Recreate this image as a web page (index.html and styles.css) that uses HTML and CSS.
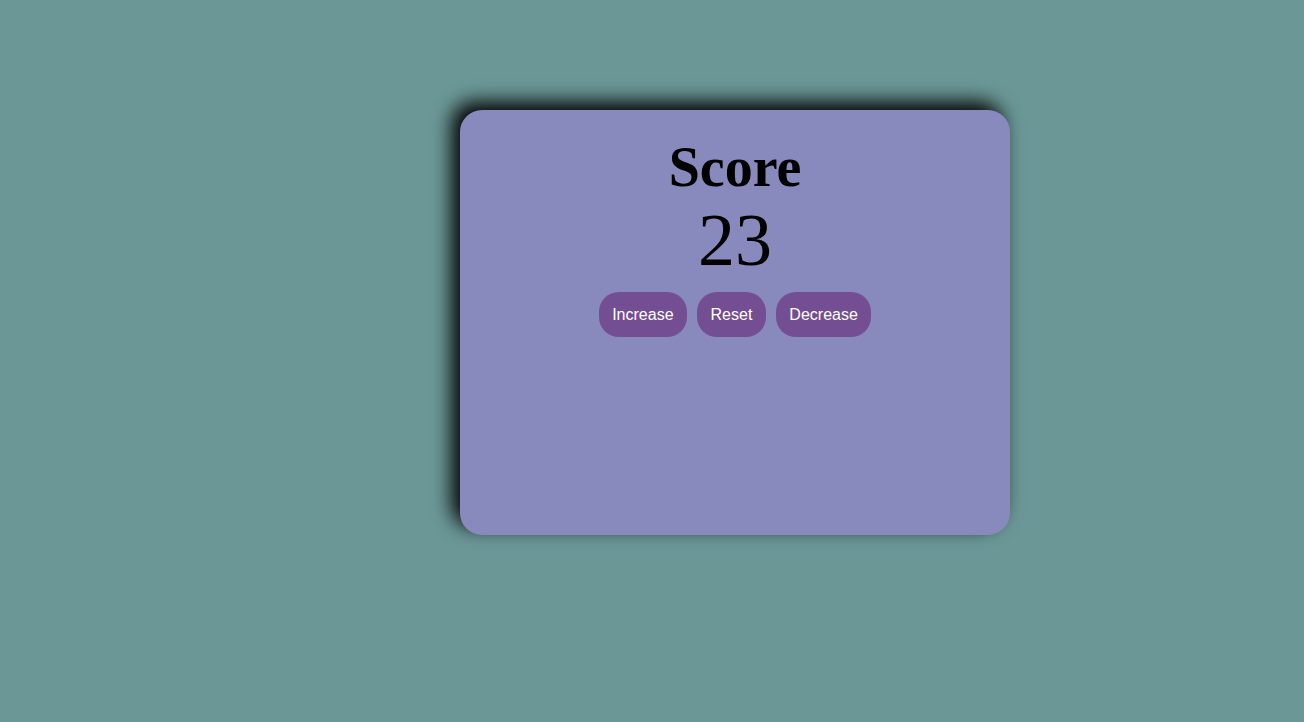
FILE: index.html
```html
<!DOCTYPE html>
<html>
<head>
<meta charset="utf-8">
<link rel="stylesheet" href="styles.css">
</head>
<body>
<div class="card">
  <h1 class="title">Score</h1>
  <div class="score">23</div>
  <div class="buttons">
    <button class="btn">Increase</button>
    <button class="btn">Reset</button>
    <button class="btn">Decrease</button>
  </div>
</div>
</body>
</html>
```
FILE: styles.css
```css
html, body {
  margin: 0;
  padding: 0;
}
body {
  background: #6b9897;
  width: 1304px;
  height: 722px;
  overflow: hidden;
  font-family: "Liberation Serif", "Times New Roman", serif;
}
.card {
  box-sizing: border-box;
  width: 550px;
  height: 425px;
  margin: 110px 0 0 460px;
  padding-top: 26px;
  background: #8889bd;
  border-radius: 22px;
  box-shadow: -8px -8px 20px #000;
  display: flex;
  flex-direction: column;
  align-items: center;
}
.title {
  margin: 0;
  font-size: 56px;
  font-weight: bold;
  line-height: 62px;
  color: #000;
}
.score {
  margin-top: 0;
  font-size: 74px;
  line-height: 84px;
  color: #000;
}
.buttons {
  margin-top: 10px;
  display: flex;
  gap: 10px;
}
.btn {
  font-family: "Liberation Sans", Arial, sans-serif;
  font-size: 16px;
  color: #fff;
  background: #744e92;
  border: none;
  border-radius: 20px;
  padding: 0 13.5px;
  height: 45px;
}
```
